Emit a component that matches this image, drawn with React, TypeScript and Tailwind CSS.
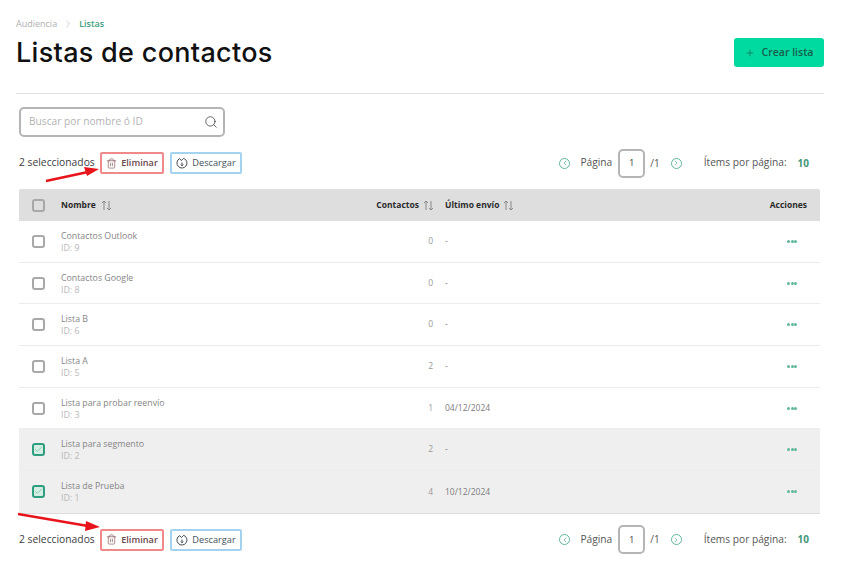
import { Plus, Search, ChevronRight, Trash2, ChevronLeft, Check } from 'lucide-react'

const ROWS = [
  { name: 'Contactos Outlook', id: 9, contacts: 0, last: '-', selected: false },
  { name: 'Contactos Google', id: 8, contacts: 0, last: '-', selected: false },
  { name: 'Lista B', id: 6, contacts: 0, last: '-', selected: false },
  { name: 'Lista A', id: 5, contacts: 2, last: '-', selected: false },
  { name: 'Lista para probar reenvío', id: 3, contacts: 1, last: '04/12/2024', selected: false },
  { name: 'Lista para segmento', id: 2, contacts: 2, last: '-', selected: true },
  { name: 'Lista de Prueba', id: 1, contacts: 4, last: '10/12/2024', selected: true },
]

function SortIcon() {
  return (
    <svg width="11" height="11" viewBox="0 0 11 11" fill="none" stroke="#8a8a8a" strokeWidth="1" className="shrink-0">
      <path d="M3 10V1M1 3l2-2 2 2M8 1v9M6 8l2 2 2-2" />
    </svg>
  )
}

function Checkbox({ checked }: { checked?: boolean }) {
  if (checked) {
    return (
      <div className="flex h-[13px] w-[13px] items-center justify-center rounded-[3px] border-2 border-[#2f9e7e] bg-[#d5eee4]">
        <Check size={9} strokeWidth={1.5} className="text-[#4caf8f]" />
      </div>
    )
  }
  return <div className="h-[13px] w-[13px] rounded-[3px] border-2 border-[#a8a8a8] bg-transparent" />
}

function CircleArrow({ dir }: { dir: 'left' | 'right' }) {
  return (
    <div className="flex h-[11px] w-[11px] items-center justify-center rounded-full border border-[#5fb89c]">
      {dir === 'left' ? (
        <ChevronLeft size={8} strokeWidth={2} className="text-[#4caf8f]" />
      ) : (
        <ChevronRight size={8} strokeWidth={2} className="text-[#4caf8f]" />
      )}
    </div>
  )
}

function DownloadIcon() {
  return (
    <svg width="12" height="12" viewBox="0 0 12 12" fill="none" stroke="#3f4a52" strokeWidth="1">
      <path d="M7.6 1.3A5 5 0 1 1 3.6 1.6L5.4 3.6 7.6 1.3" />
      <path d="M6 5.5v3M4.8 7.6 6 8.8l1.2-1.2" />
    </svg>
  )
}

function Toolbar() {
  return (
    <div className="flex h-[26px] items-center pl-[19px] pr-[35px]">
      <span className="w-[76px] text-[10.3px] whitespace-nowrap text-[#3d3d3d]">2 seleccionados</span>
      <button className="ml-[5px] flex h-[22px] w-[64px] items-center justify-center gap-[4px] rounded-[2px] border-2 border-[#f08a8a] text-[9.2px] font-semibold text-[#6b4a4a]">
        <Trash2 size={11} strokeWidth={1.5} className="text-[#8a5a5a]" />
        Eliminar
      </button>
      <button className="ml-[6px] flex h-[22px] w-[72px] items-center justify-center gap-[4px] rounded-[2px] border-2 border-[#a3d3ee] text-[9.2px] font-medium text-[#44525a]">
        <DownloadIcon />
        Descargar
      </button>
      <div className="ml-auto flex items-center">
        <CircleArrow dir="left" />
        <span className="ml-[10px] text-[10.2px] text-[#555555]">Página</span>
        <div className="ml-[6px] flex h-[29px] w-[27px] items-center justify-center rounded-[5px] border-2 border-[#b5b5b5] text-[9.5px] text-[#444444]">
          1
        </div>
        <span className="ml-[5px] text-[10px] text-[#555555]">/1</span>
        <div className="ml-[11px]">
          <CircleArrow dir="right" />
        </div>
        <span className="ml-[22px] text-[10.2px] text-[#555555]">Ítems por página:</span>
        <span className="ml-[11px] text-[10px] font-bold text-[#3f9577]">10</span>
      </div>
    </div>
  )
}

export default function App() {
  return (
    <div className="relative h-[574px] w-[844px] overflow-hidden bg-white font-['Open_Sans',sans-serif]">
      <div className="pl-[16px] pt-[18px] pr-[20px]">
        <div className="flex h-[12px] items-center text-[9px]">
          <span className="text-[#b0b0b0]">Audiencia</span>
          <ChevronRight size={12} strokeWidth={1} className="mx-[5px] text-[#a0a0a0]" />
          <span className="font-semibold text-[#3f9f7d]">Listas</span>
        </div>
        <div className="mt-[4px] flex h-[38px] items-start justify-between">
          <h1 className="font-['Inter',sans-serif] text-[27px] font-medium leading-[38px] tracking-[0.3px] text-[#111111]">
            Listas de contactos
          </h1>
          <button className="mt-[4px] flex h-[29px] w-[90px] items-center justify-center gap-[7px] rounded-[3px] bg-[#00d9a0] text-[10.5px] font-semibold text-[#14604c]">
            <Plus size={10} strokeWidth={1.5} />
            Crear lista
          </button>
        </div>
        <div className="mt-[21px] h-px bg-[#e2e2e2]" />
      </div>

      <div className="ml-[19px] mt-[13px] flex h-[30px] w-[206px] items-center justify-between rounded-[5px] border-2 border-[#b5b5b5] pl-[8px] pr-[5px]">
        <span className="text-[10.2px] text-[#b3b3b3]">Buscar por nombre ó ID</span>
        <Search size={14} strokeWidth={1.25} className="text-[#333333]" />
      </div>

      <div className="mt-[13px]">
        <Toolbar />
      </div>

      <div className="ml-[19px] mt-[13px] w-[801px] overflow-hidden rounded-t-[2px] border-b border-[#dddddd]">
        <div className="flex h-[32px] items-center bg-[#dedede] text-[8.5px] font-bold text-[#2a2a2a]">
          <div className="w-[42px] pl-[13px]">
            <Checkbox />
          </div>
          <div className="flex w-[316px] items-center gap-[5px]">
            Nombre
            <SortIcon />
          </div>
          <div className="flex w-[57px] items-center justify-end gap-[4px]">
            Contactos
            <SortIcon />
          </div>
          <div className="ml-[11px] flex w-[200px] items-center gap-[4px]">
            Último envío
            <SortIcon />
          </div>
          <div className="ml-auto pr-[13px]">Acciones</div>
        </div>
        {ROWS.map((row) => (
          <div
            key={row.id}
            className={`flex h-[41.7px] items-center border-b border-[#ececec] last:border-b-0 ${row.selected ? 'bg-[#efefef]' : 'bg-white'}`}
          >
            <div className="w-[42px] pl-[13px]">
              <Checkbox checked={row.selected} />
            </div>
            <div className="w-[316px] pt-[1px] leading-[12px]">
              <div className="text-[8.8px] text-[#858585]">{row.name}</div>
              <div className="text-[8.8px] text-[#b8b8b8]">ID: {row.id}</div>
            </div>
            <div className="w-[57px] pr-[1px] text-right text-[8.5px] text-[#999999]">{row.contacts}</div>
            <div className="ml-[11px] w-[200px] text-[8.5px] text-[#7c7c7c]">{row.last}</div>
            <div className="ml-auto flex gap-[0.5px] pr-[23px]">
              <span className="h-[3px] w-[3px] rounded-full bg-[#5fb89c]" />
              <span className="h-[3px] w-[3px] rounded-full bg-[#5fb89c]" />
              <span className="h-[3px] w-[3px] rounded-full bg-[#5fb89c]" />
            </div>
          </div>
        ))}
      </div>

      <div className="mt-[13px]">
        <Toolbar />
      </div>

      <svg width="844" height="574" viewBox="0 0 844 574" className="pointer-events-none absolute left-0 top-0">
        <path d="M46 181 L88 172" stroke="#e8141c" strokeWidth="2.5" />
        <path d="M84 167 L99 169 L87 176 Z" fill="#e8141c" />
        <path d="M18 514 L88 526" stroke="#e8141c" strokeWidth="2.5" />
        <path d="M86 521 L100 527 L85 531 Z" fill="#e8141c" />
      </svg>
    </div>
  )
}
